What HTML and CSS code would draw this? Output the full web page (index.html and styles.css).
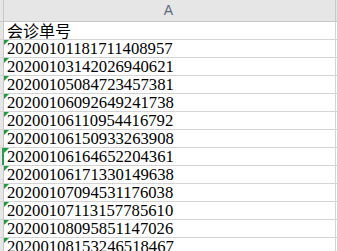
FILE: index.html
```html
<!DOCTYPE html>
<html lang="zh">
<head>
<meta charset="utf-8">
<link rel="stylesheet" href="styles.css">
</head>
<body>
<div class="sheet">
  <div class="row head">
    <div class="rh"></div>
    <div class="cell colhead">A</div>
    <div class="next"></div>
  </div>
  <div class="row">
    <div class="rh"></div>
    <div class="cell cjk">会诊单号</div>
    <div class="next"></div>
  </div>
  <div class="row"><div class="rh"></div><div class="cell num">20200101181711408957</div><div class="next"></div></div>
  <div class="row"><div class="rh"></div><div class="cell num">20200103142026940621</div><div class="next"></div></div>
  <div class="row"><div class="rh"></div><div class="cell num">20200105084723457381</div><div class="next"></div></div>
  <div class="row"><div class="rh"></div><div class="cell num">20200106092649241738</div><div class="next"></div></div>
  <div class="row"><div class="rh"></div><div class="cell num">20200106110954416792</div><div class="next"></div></div>
  <div class="row"><div class="rh"></div><div class="cell num">20200106150933263908</div><div class="next"></div></div>
  <div class="row"><div class="rh sel"></div><div class="cell num">20200106164652204361</div><div class="next"></div></div>
  <div class="row"><div class="rh"></div><div class="cell num">20200106171330149638</div><div class="next"></div></div>
  <div class="row"><div class="rh"></div><div class="cell num">20200107094531176038</div><div class="next"></div></div>
  <div class="row"><div class="rh"></div><div class="cell num">20200107113157785610</div><div class="next"></div></div>
  <div class="row"><div class="rh"></div><div class="cell num">20200108095851147026</div><div class="next"></div></div>
  <div class="row"><div class="rh"></div><div class="cell num">20200108153246518467</div><div class="next"></div></div>
</div>
</body>
</html>
```
FILE: styles.css
```css
html, body {
  margin: 0;
  padding: 0;
  background: #ffffff;
  overflow: hidden;
}
.sheet {
  display: flex;
  flex-direction: column;
  width: 337px;
}
.row {
  display: flex;
  height: 17px;
  border-bottom: 1px solid #d4d4d4;
}
.row.head {
  height: 21px;
  background: #e6e6e6;
  border-bottom: 1px solid #c8c8c8;
}
.rh {
  width: 3px;
  background: #e6e6e6;
  border-right: 1px solid #c8c8c8;
  flex: none;
}
.rh.sel {
  border-right-color: #22a04a;
  width: 2px;
  border-right-width: 2px;
}
.cell {
  flex: none;
  border-right: 1px solid #d4d4d4;
  position: relative;
  box-sizing: border-box;
  width: 332px;
  padding-left: 3px;
  display: flex;
  align-items: flex-end;
  color: #000;
  white-space: nowrap;
}
.head .cell {
  border-right-color: #c8c8c8;
}
.next {
  flex: 1;
}
.colhead {
  justify-content: center;
  align-items: center;
  padding-left: 0;
  font-family: "Liberation Sans", Arial, sans-serif;
  font-size: 14px;
  color: #5a6a7e;
  padding-bottom: 2px;
  padding-right: 2px;
}
.cjk {
  font-family: "Noto Sans CJK SC", sans-serif;
  font-size: 16px;
  line-height: 17px;
  padding-left: 3px;
}
.num {
  font-family: "Liberation Serif", "Times New Roman", serif;
  font-size: 16.7px;
  line-height: 16px;
}
.num::before {
  content: "";
  position: absolute;
  left: 0;
  top: 0;
  border-top: 5px solid #1f9a42;
  border-right: 5px solid transparent;
}
```
